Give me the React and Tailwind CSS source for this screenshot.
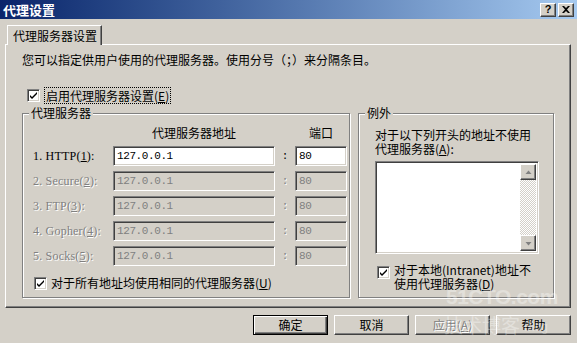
import React from "react";

const CJK = "font-['Noto_Sans_CJK_SC',sans-serif]";
const MONO = "font-['Liberation_Mono',monospace]";
const SERIF = "font-['Liberation_Serif',serif]";
const SUNKEN =
  "border border-t-[#808080] border-l-[#808080] border-b-white border-r-white shadow-[inset_1px_1px_0_#404040,inset_-1px_-1px_0_#d4d0c8]";
const RAISED =
  "border border-t-white border-l-white border-r-[#404040] border-b-[#404040] shadow-[inset_-1px_-1px_0_#808080]";
const DIS = "text-[#808080] [text-shadow:1px_1px_0_#ffffff]";

function Check() {
  return (
    <span className={`w-[13px] h-[13px] shrink-0 bg-white flex items-center justify-center ${SUNKEN}`}>
      <svg width="9" height="9" viewBox="0 0 9 9">
        <path d="M1 4 L3 6 L8 1 L8 3 L3 8 L1 6 Z" fill="#000" />
      </svg>
    </span>
  );
}

function Frame({ label, className, children }) {
  return (
    <div
      className={`relative border border-[#808080] shadow-[inset_1px_1px_0_#ffffff,1px_1px_0_#ffffff] ${className}`}
    >
      <span className="absolute -top-[9px] left-[6px] px-[2px] bg-[#d4d0c8] leading-[16px]">{label}</span>
      {children}
    </div>
  );
}

const rows = [
  { n: "1.", name: "HTTP", k: "1", on: true },
  { n: "2.", name: "Secure", k: "2" },
  { n: "3.", name: "FTP", k: "3" },
  { n: "4.", name: "Gopher", k: "4" },
  { n: "5.", name: "Socks", k: "5" },
];

function Btn({ children, def, disabled }) {
  return (
    <div
      className={`w-[75px] h-[20px] flex items-center justify-center ${
        def
          ? "border border-black shadow-[inset_1px_1px_0_#ffffff,inset_-1px_-1px_0_#404040,inset_-2px_-2px_0_#808080]"
          : RAISED
      } ${disabled ? DIS : "text-black"}`}
    >
      {children}
    </div>
  );
}

export default function App() {
  return (
    <div className={`relative w-[577px] h-[343px] bg-[#d4d0c8] text-[12px] text-black overflow-hidden ${CJK}`}>
      {/* title bar */}
      <div className="h-[19px] flex items-center justify-between pl-[3px] pr-[3px] bg-gradient-to-r from-[#0a246a] to-[#a6caf0]">
        <span className="text-white font-bold text-[13px] leading-[19px]">代理设置</span>
        <div className="flex gap-[2px]">
          <div className={`w-[16px] h-[14px] bg-[#d4d0c8] flex items-center justify-center font-bold text-[11px] leading-none ${RAISED} font-['Liberation_Sans',sans-serif]`}>
            ?
          </div>
          <div className={`w-[16px] h-[14px] bg-[#d4d0c8] flex items-center justify-center ${RAISED}`}>
            <svg width="8" height="7" viewBox="0 0 8 7">
              <path d="M0 0 L2 0 L4 2 L6 0 L8 0 L5 3.5 L8 7 L6 7 L4 5 L2 7 L0 7 L3 3.5 Z" fill="#000" />
            </svg>
          </div>
        </div>
      </div>

      {/* tab */}
      <div className="mt-[6px] ml-[7px] flex">
        <div className="relative z-10 h-[20px] -mb-[1px] pl-[5px] pr-[4px] bg-[#d4d0c8] border-l border-t border-white border-r border-r-[#404040] shadow-[inset_-1px_0_0_#808080] flex items-center leading-[16px]">
          代理服务器设置
        </div>
      </div>

      {/* panel */}
      <div className="ml-[5px] w-[566px] h-[264px] border border-t-white border-l-white border-r-[#404040] border-b-[#404040] shadow-[inset_-1px_-1px_0_#808080] pl-[16px] pt-[7px]">
        <div className="leading-[16px]">您可以指定供用户使用的代理服务器。使用分号（；）来分隔条目。</div>

        <div className="mt-[18px] ml-[5px] h-[18px] flex items-center gap-[4px]">
          <Check />
          <span className="border border-dotted border-black px-[1px] leading-[15px]">
            启用代理服务器设置(<span className="underline">E</span>)
          </span>
        </div>

        <div className="mt-[9px] flex gap-[8px]">
          <Frame label="代理服务器" className="w-[328px] h-[185px] pl-[10px] pr-[2px] pt-[11px]">
            <div className="flex leading-[16px]">
              <span className="w-[80px]" />
              <span className="w-[162px] text-center">代理服务器地址</span>
              <span className="w-[20px]" />
              <span className="w-[52px] text-center">端口</span>
            </div>
            <div className="mt-[5px] flex flex-col gap-[5px]">
              {rows.map((r) => (
                <div key={r.n} className="flex items-center h-[20px]">
                  <span
                    className={`w-[80px] ${SERIF} text-[12px] tracking-[0.2px] whitespace-nowrap ${
                      r.on ? "text-black" : DIS
                    }`}
                  >
                    {r.n} {r.name}(<span className="underline">{r.k}</span>):
                  </span>
                  <div
                    className={`w-[162px] h-[20px] ${SUNKEN} ${
                      r.on ? "bg-white text-black" : "bg-[#d4d0c8] text-[#808080]"
                    } flex items-center pl-[3px] ${MONO} text-[11px] tracking-[-0.4px]`}
                  >
                    127.0.0.1
                  </div>
                  <span className={`w-[20px] text-center ${MONO} text-[11px] ${r.on ? "text-black" : DIS}`}>:</span>
                  <div
                    className={`w-[52px] h-[20px] ${SUNKEN} ${
                      r.on ? "bg-white text-black" : "bg-[#d4d0c8] text-[#808080]"
                    } flex items-center pl-[3px] ${MONO} text-[11px] tracking-[-0.4px]`}
                  >
                    80
                  </div>
                </div>
              ))}
            </div>
            <div className="mt-[9px] ml-[1px] h-[16px] flex items-center gap-[4px] leading-[16px]">
              <Check />
              <span>
                对于所有地址均使用相同的代理服务器(<span className="underline">U</span>)
              </span>
            </div>
          </Frame>

          <Frame label="例外" className="w-[196px] h-[185px] pl-[16px] pt-[14px]">
            <div className="leading-[14px]">
              对于以下列开头的地址不使用
              <br />
              代理服务器(<span className="underline">A</span>):
            </div>
            <div className={`mt-[5px] w-[164px] h-[93px] bg-white ${SUNKEN} p-[2px] flex justify-end`}>
              <div className="w-[16px] h-full flex flex-col [background-image:repeating-conic-gradient(#d4d0c8_0%_25%,#ffffff_0%_50%)] [background-size:2px_2px]">
                <div className={`w-[16px] h-[16px] bg-[#d4d0c8] ${RAISED} flex items-center justify-center`}>
                  <svg width="7" height="5" viewBox="0 0 7 5">
                    <path d="M3.5 0.5 L6.5 4 L0.5 4 Z" fill="#808080" />
                  </svg>
                </div>
                <div className="flex-1" />
                <div className={`w-[16px] h-[16px] bg-[#d4d0c8] ${RAISED} flex items-center justify-center`}>
                  <svg width="7" height="5" viewBox="0 0 7 5">
                    <path d="M0.5 1 L6.5 1 L3.5 4.5 Z" fill="#808080" />
                  </svg>
                </div>
              </div>
            </div>
            <div className="mt-[9px] ml-[2px] flex items-start gap-[4px] leading-[14px]">
              <span className="mt-[3px]">
                <Check />
              </span>
              <span>
                对于本地(Intranet)地址不
                <br />
                使用代理服务器(<span className="underline">D</span>)
              </span>
            </div>
          </Frame>
        </div>
      </div>

      {/* buttons */}
      <div className="mt-[7px] pr-[6px] flex justify-end gap-[6px]">
        <Btn def>确定</Btn>
        <Btn>取消</Btn>
        <Btn disabled>
          应用(<span className="underline">A</span>)
        </Btn>
        <Btn>帮助</Btn>
      </div>

      {/* watermark */}
      <div className="absolute left-[446px] top-[284px] pointer-events-none text-white/35 font-['Liberation_Sans',sans-serif] font-bold text-[21px] leading-[26px] tracking-[-0.5px]">
        51CTO.com
      </div>
      <div className="absolute left-[444px] top-[314px] pointer-events-none text-white/35 flex items-end gap-[4px]">
        <span className="text-[19px] leading-[22px]">技术博客</span>
        <span className="text-[12px] leading-[18px] font-['Liberation_Sans',sans-serif]">Blog</span>
      </div>
    </div>
  );
}
